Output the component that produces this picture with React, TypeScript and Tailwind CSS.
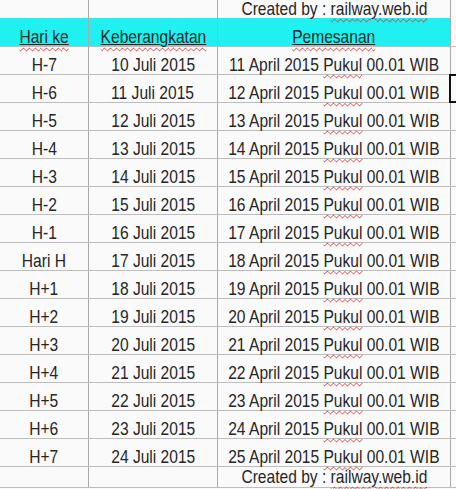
const COLS = 'grid grid-cols-[89px_129px_233px_5px]';

const data = Array.from({ length: 15 }, (_, i) => {
  const n = i - 7;
  const label = n === 0 ? 'Hari H' : n < 0 ? `H${n}` : `H+${n}`;
  return {
    label,
    departure: `${10 + i} Juli 2015`,
    orderDate: `${11 + i} April 2015`,
  };
});

const Txt = ({ children }: { children: React.ReactNode }) => (
  <span className="inline-block origin-center scale-x-[0.82] whitespace-nowrap text-[19px] leading-[18px] text-[#262626]">
    {children}
  </span>
);

const Squiggle = ({ children }: { children: React.ReactNode }) => (
  <span className="underline decoration-[#d8322e] decoration-wavy decoration-1 underline-offset-[3px]">
    {children}
  </span>
);

const HeaderLabel = ({ children }: { children: React.ReactNode }) => (
  <span className="underline decoration-[#262626] decoration-1 underline-offset-[1px]">
    <span className="underline decoration-[#d8322e] decoration-wavy decoration-1 underline-offset-[4px]">
      {children}
    </span>
  </span>
);

const Cell = ({
  children,
  className = '',
}: {
  children?: React.ReactNode;
  className?: string;
}) => (
  <div className={`flex items-end justify-center border-r border-[#a9a9a9] ${className}`}>
    {children}
  </div>
);

const Credit = () => (
  <Txt>
    Created by : <Squiggle>railway.web.id</Squiggle>
  </Txt>
);

export default function App() {
  return (
    <div className="h-[489px] w-[456px] overflow-hidden bg-[#fafafa] font-['Liberation_Sans',Arial,sans-serif]">
      {/* credit row */}
      <div className={`${COLS} h-[18px]`}>
        <Cell />
        <Cell />
        <Cell>
          <Credit />
        </Cell>
        <div />
      </div>

      {/* header */}
      <div className={`${COLS} h-[29px] border-b border-[#bdbdbd]`}>
        <Cell className="bg-[#1ff0f0]">
          <Txt>
            <HeaderLabel>Hari ke</HeaderLabel>
          </Txt>
        </Cell>
        <Cell className="bg-[#1ff0f0]">
          <Txt>
            <HeaderLabel>Keberangkatan</HeaderLabel>
          </Txt>
        </Cell>
        <Cell className="bg-[#1ff0f0]">
          <Txt>
            <HeaderLabel>Pemesanan</HeaderLabel>
          </Txt>
        </Cell>
        <div />
      </div>

      {data.map((row, i) => (
        <div key={row.label} className={`${COLS} h-[28px] border-b border-[#bdbdbd]`}>
          <Cell>
            <Txt>{row.label}</Txt>
          </Cell>
          <Cell>
            <Txt>{row.departure}</Txt>
          </Cell>
          <Cell>
            <Txt>
              {row.orderDate} <Squiggle>Pukul</Squiggle> 00.01 WIB
            </Txt>
          </Cell>
          <div className="relative">
            {i === 1 ? (
              <div className="absolute -bottom-[1px] -left-[2px] -top-[1px] -right-[4px] border-2 border-[#111]" />
            ) : null}
          </div>
        </div>
      ))}

      {/* bottom credit row */}
      <div className={`${COLS} h-[21px] border-b border-[#bdbdbd]`}>
        <Cell className="pb-[1px]" />
        <Cell className="pb-[1px]" />
        <Cell className="pb-[1px]">
          <Credit />
        </Cell>
        <div />
      </div>
    </div>
  );
}
